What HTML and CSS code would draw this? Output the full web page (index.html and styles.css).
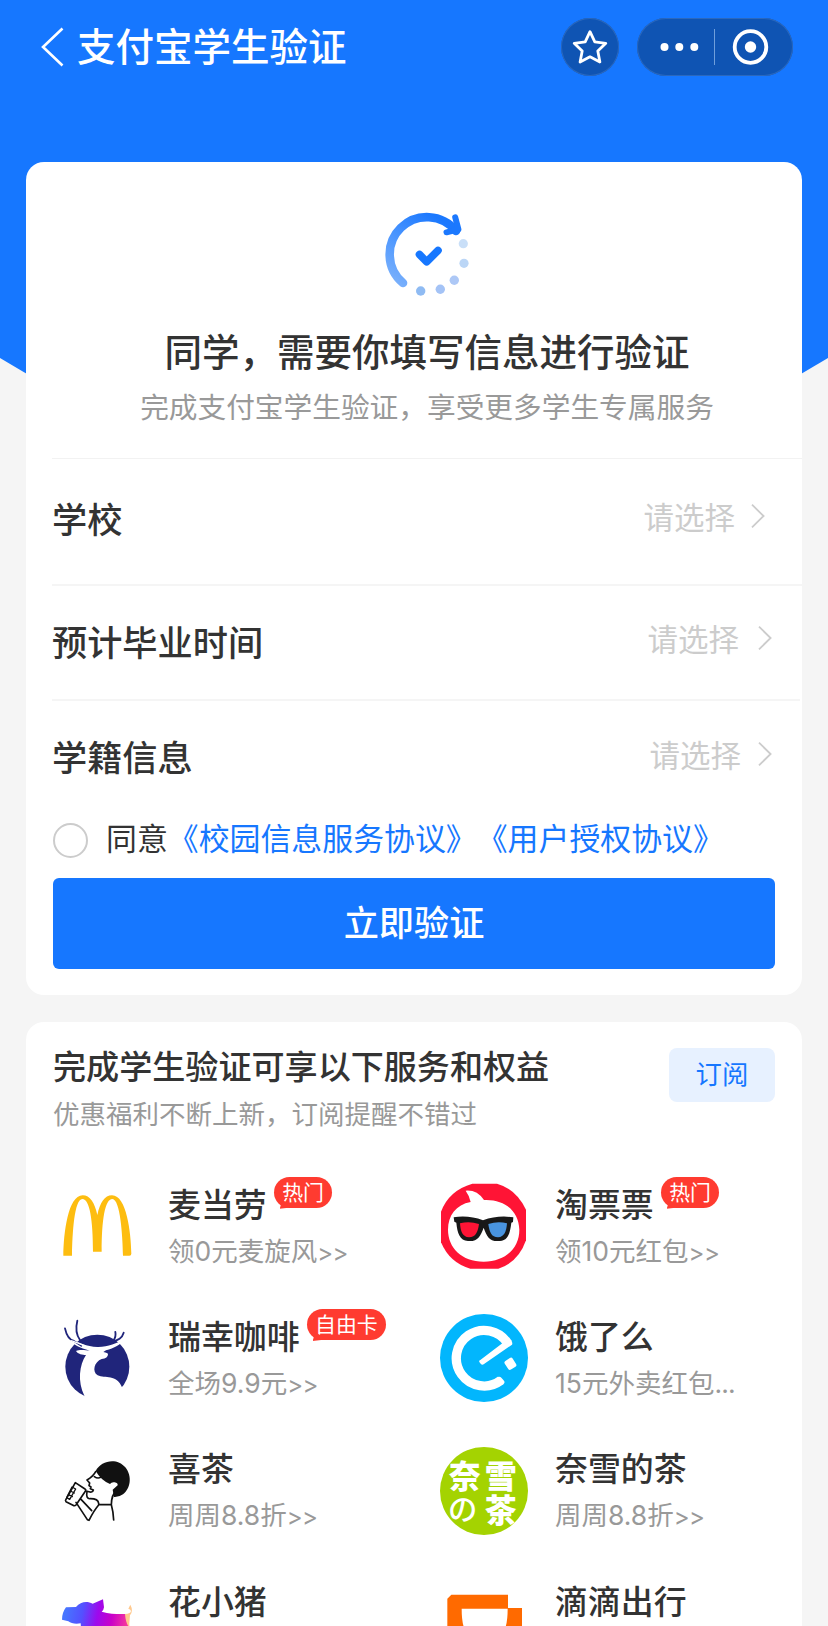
FILE: index.html
```html
<!DOCTYPE html>
<html lang="zh-CN">
<head>
<meta charset="utf-8">
<title>支付宝学生验证</title>
<link rel="stylesheet" href="styles.css">
</head>
<body>
<div class="page">
  <header class="topbar">
    <svg class="back" width="24" height="40" viewBox="0 0 24 40"><path d="M22.500 1.500 3 20l19.500 18.500" fill="none" stroke="#fff" stroke-width="2.600"/></svg>
    <h1 class="topbar-title">支付宝学生验证</h1>
    <div class="round-btn"><svg width="38" height="38" viewBox="0 0 38 38"><path d="M19 3.700 23.800 13.900 34.800 15.300 26.800 23.100 28.900 34 19 28.800 9.100 34 11.200 23.100 3.200 15.300 14.200 13.900Z" fill="none" stroke="#fff" stroke-width="2.800" stroke-linejoin="round"/></svg></div>
    <div class="capsule">
      <svg width="156" height="58" viewBox="0 0 156 58"><g fill="#fff"><circle cx="27.500" cy="29" r="4"/><circle cx="42.300" cy="29" r="4"/><circle cx="57.300" cy="29" r="4"/><circle cx="113.500" cy="29" r="5.700"/></g><path d="M77.500 11v36" stroke="#6f9fdc" stroke-width="1"/><circle cx="113.500" cy="29" r="15.800" fill="none" stroke="#fff" stroke-width="3.800"/></svg>
    </div>
  </header>

  <main class="content">
    <section class="card verify">
      <div class="intro">
        <svg class="intro-icon" width="90" height="90" viewBox="382 208 90 90">
          <defs><linearGradient id="ring" x1="0" y1="1" x2=".7" y2="0"><stop offset="0" stop-color="#7db2fb"/><stop offset=".5" stop-color="#4d97ff"/><stop offset="1" stop-color="#1b78fe"/></linearGradient></defs>
          <path d="M403 283A37.300 37.300 0 1 1 456 231" fill="none" stroke="url(#ring)" stroke-width="8.600" stroke-linecap="round"/>
          <path d="M455.200 217.300 458.400 229.300 446.500 232.300" fill="none" stroke="#1b78fe" stroke-width="6" stroke-linecap="round" stroke-linejoin="round"/>
          <path d="m419.500 254.500 7.200 7.300 11.300-11.300" fill="none" stroke="#1677ff" stroke-width="7.600" stroke-linecap="round" stroke-linejoin="round"/>
          <circle cx="463.300" cy="243.700" r="4.600" fill="#c9dff8"/><circle cx="464" cy="263.300" r="4.600" fill="#bbd6f6"/><circle cx="454.300" cy="280.300" r="4.700" fill="#adc8f6"/><circle cx="440.300" cy="289.300" r="4.700" fill="#a4c3f6"/><circle cx="420.700" cy="291" r="4.700" fill="#8fbbf3"/>
        </svg>
        <h2 class="intro-title">同学，需要你填写信息进行验证</h2>
        <p class="intro-sub">完成支付宝学生验证，享受更多学生专属服务</p>
      </div>
      <div class="row row-school"><span class="label">学校</span><span class="value">请选择</span><svg class="arrow" width="14" height="26" viewBox="0 0 14 26"><path d="M1 1.700 12.600 13 1 24.300" fill="none" stroke="#ccc" stroke-width="1.800"/></svg></div>
      <div class="row row-grad"><span class="label">预计毕业时间</span><span class="value">请选择</span><svg class="arrow" width="14" height="26" viewBox="0 0 14 26"><path d="M1 1.700 12.600 13 1 24.300" fill="none" stroke="#ccc" stroke-width="1.800"/></svg></div>
      <div class="row row-status"><span class="label">学籍信息</span><span class="value">请选择</span><svg class="arrow" width="14" height="26" viewBox="0 0 14 26"><path d="M1 1.700 12.600 13 1 24.300" fill="none" stroke="#ccc" stroke-width="1.800"/></svg></div>
      <div class="agree"><span class="radio"></span><p class="agree-text">同意<a>《校园信息服务协议》</a><a>《用户授权协议》</a></p></div>
      <button class="submit">立即验证</button>
    </section>

    <section class="card benefits">
      <div class="benefits-head">
        <div>
          <h2 class="benefits-title">完成学生验证可享以下服务和权益</h2>
          <p class="benefits-sub">优惠福利不断上新，订阅提醒不错过</p>
        </div>
        <button class="subscribe">订阅</button>
      </div>
      <div class="grid">
        <div class="item">
          <svg class="logo" viewBox="39 37 264 264"><path d="M70 258C71 190 84 77 128 77c22 0 36 22 44 59 8-37 22-59 44-59 44 0 57 113 58 175q0 6-6 6h-19C248 200 241 88 217 88c-22 0-32 62-32 158h-26C159 150 149 88 127 88 103 88 97 190 96 258Z" fill="#fdbd10"/></svg>
          <div class="info"><div class="name">麦当劳<span class="badge">热门</span></div><div class="desc">领0元麦旋风<span class="more">&gt;&gt;</span></div></div>
        </div>
        <div class="item">
          <svg class="logo" viewBox="63 37 264 264"><path d="M160 42h74Q292 58 321 120v92Q298 278 238 297h-84Q92 280 66 218v-92Q90 62 160 42Z" fill="#ff1435"/><path d="M155 97q-4-19-15-34 34-3 55 28c61-3 104 32 106 89 0 54-40 96-107 96-66 0-107-42-107-96 0-43 24-75 68-83Z" fill="#fff"/><path d="M104 143q45-7 88 9 44-16 91-9l-1 14-5 2c-4 32-10 54-34 55-33 3-39-14-49-40-10 26-17 42-47 40-25-2-32-24-35-55l-6-3Z" fill="#181818"/><path d="M123 161q28-8 57 2c-3 23-10 40-30 40-20-1-25-17-27-42Z" fill="#ff1435"/><path d="M208 163q29-10 56-2c-2 25-8 41-27 42-20 0-26-17-29-40Z" fill="#4994df"/></svg>
          <div class="info"><div class="name">淘票票<span class="badge">热门</span></div><div class="desc">领10元红包<span class="more">&gt;&gt;</span></div></div>
        </div>
        <div class="item">
          <svg class="logo" viewBox="9 12 264 264"><circle cx="142" cy="170" r="96" fill="#20257b"/><path d="M103 257C82 215 88 165 108 135 98 135 83 132 78 123 90 117 108 121 119 122 90 114 68 104 58 88 85 96 112 112 145 111 175 110 200 100 226 86 212 104 192 114 168 121L160 126Q174 128 174 133 174 145 155 147C133 155 125 185 143 196 165 206 200 192 216 232L222 270H108Z" fill="#fff"/><path d="M45 55Q52 88 72 93L94 107M82 32C75 60 80 76 90 90M221 68C216 86 203 90 186 96M196 66Q199 80 190 92" fill="none" stroke="#20257b" stroke-width="5.500" stroke-linecap="round"/><path d="M62 92C90 98 110 116 145 119 180 118 205 104 222 86" fill="none" stroke="#fff" stroke-width="4"/></svg>
          <div class="info"><div class="name">瑞幸咖啡<span class="badge">自由卡</span></div><div class="desc">全场9.9元<span class="more">&gt;&gt;</span></div></div>
        </div>
        <div class="item">
          <svg class="logo" viewBox="63 432 264 264"><circle cx="195" cy="564" r="132" fill="#02b6fd"/><path d="M266 520A83.500 83.500 0 1 0 246 631" fill="none" stroke="#fff" stroke-width="28"/><path d="m184 570 66-50 26-10q6 9 3 14l-85 59q-5 3-9-2l-4-5q-2-4 3-6ZM236 622q6-4 11 1l8 9q4 6-2 10l-12 6Z" fill="#fff"/><rect x="260" y="566" width="28" height="31" rx="6" transform="rotate(-33 274 581)" fill="#fff"/></svg>
          <div class="info"><div class="name">饿了么</div><div class="desc">15元外卖红包<span class="dots">...</span></div></div>
        </div>
        <div class="item">
          <svg class="logo" viewBox="39 109 264 264"><path d="M167 181c16-32 64-41 89-11 22 27 15 65-7 81q-12 9-27 8l-4-22 15-13q1-7-9-9-9-2-14 5-27-11-43-39Z" fill="#111"/><g fill="none" stroke="#111" stroke-width="5" stroke-linejoin="round" stroke-linecap="round"><path d="M167 183q-7 14-26 25l8 9-2 8 6 4-2 5 9 4q-2 10-19 4-4 24 10 22c13 0 24 5 25 14v5q-14 16-29 46l-5-2-34-52M121 264l34 36M176 282h38M231 238q-17 14-17 44 6 21 7 46M163 198q10 7 19 2M106 216 135 235Q139 237 136 242L108 283Q104 287 99 284L78 273Q75 270 78 266Z"/><path d="m96 229 11 6-18 31-9-5ZM91 241l12 6M85 252l12 6" stroke-width="4"/></g></svg>
          <div class="info"><div class="name">喜茶</div><div class="desc">周周8.8折<span class="more">&gt;&gt;</span></div></div>
        </div>
        <div class="item">
          <svg class="logo" viewBox="63 109 264 264"><circle cx="195" cy="241" r="132" fill="#a4d301"/><g class="logo-text" fill="#fff"><text x="89" y="231">奈</text><text x="197" y="231">雪</text><text class="kana" x="87" y="329">の</text><text x="197" y="333">茶</text></g></svg>
          <div class="info"><div class="name">奈雪的茶</div><div class="desc">周周8.8折<span class="more">&gt;&gt;</span></div></div>
        </div>
        <div class="item">
          <svg class="logo" viewBox="39 505 264 264"><defs><linearGradient id="pig" gradientUnits="userSpaceOnUse" x1="80" y1="590" x2="275" y2="625"><stop offset="0" stop-color="#4775ff"/><stop offset=".25" stop-color="#5450ff"/><stop offset=".48" stop-color="#9d09ed"/><stop offset=".7" stop-color="#c900c9"/><stop offset="1" stop-color="#ff4693"/></linearGradient></defs><path d="m78 590 30-1c14-17 34-18 50-10l31-13 3 24q-1 9-7 13c31 9 57 7 80 7l5 70H125l-3-42c-17 4-29-1-37-6l-19-5q0-21 12-37Z" fill="url(#pig)"/><path d="M255 610c21-1 22-12 10-16l6-12q10 19-1 32l-3 35q-10-12-12-39Z" fill="#ffc98e"/></svg>
          <div class="info"><div class="name">花小猪</div></div>
        </div>
        <div class="item">
          <svg class="logo" viewBox="63 505 264 264"><path d="M97 552h170v40h42v56q0 70-70 70h-84q-70 0-70-70v-84Z" fill="#ff6a00"/><path d="M128 594h138q0 34-6 54 0 30-30 30h-66q-30 0-30-30-6-20-6-54Z" fill="#fff"/></svg>
          <div class="info"><div class="name">滴滴出行</div></div>
        </div>
      </div>
    </section>
  </main>
</div>
</body>
</html>
```
FILE: styles.css
```css
* { box-sizing: border-box; margin: 0; padding: 0; }
body {
  background: #f5f5f5;
  color: #333;
  font-family: "Noto Sans CJK SC", sans-serif;
  text-spacing-trim: space-all;
}
h1, h2 { font-weight: 500; }
button { border: 0; font-family: inherit; }
svg { display: block; flex: none; }

.page {
  height: 1626px;
  overflow: hidden;
  background: #f5f5f5;
  position: relative;
}
.page::before {
  content: "";
  position: absolute;
  inset: 0 0 auto;
  height: 480px;
  background: #1677ff;
  clip-path: polygon(0 0, 100% 0, 100% 358px, 90% 407px, 10% 407px, 0 358px);
}
.topbar, .content { position: relative; }
.topbar {
  height: 94px;
  padding: 0 35px 0 40px;
  display: flex;
  align-items: center;
  color: #fff;
}
.topbar-title {
  margin-left: 13px;
  font-size: 38.500px;
  line-height: 54px;
  padding-bottom: 7px;
  flex: 1;
}
.round-btn, .capsule {
  height: 58px;
  border-radius: 29px;
  background: #0f54b3;
  box-shadow: inset 0 0 0 1px #2b68bd;
}
.round-btn {
  width: 58px;
  display: flex;
  align-items: center;
  justify-content: center;
  margin-right: 18px;
}
.capsule { width: 156px; }

.content { padding: 68px 26px 0; }
.card { background: #fff; border-radius: 18px; }
.verify { height: 833px; padding-left: 26px; }
.intro {
  height: 297px;
  padding-top: 46px;
  border-bottom: 1px solid #f2f2f2;
  text-align: center;
}
.intro-icon { margin: 0 auto; }
.intro-title { font-size: 37.500px; line-height: 54px; margin-top: 25px; white-space: nowrap; }
.intro-sub { font-size: 28.700px; line-height: 40px; margin-top: 9px; color: #999; white-space: nowrap; }

.row { display: flex; align-items: center; }
.row-school { height: 127px; border-bottom: 2px solid #f5f5f5; padding: 0 37px 5px 0; }
.row-grad { height: 115px; border-bottom: 2px solid #f5f5f5; margin-right: 2px; padding: 0 28px 2px 0; }
.row-status { height: 112px; padding: 0 30px 0 0; }
.label { flex: 1; font-size: 35.200px; line-height: 50px; font-weight: 500; padding-bottom: 2px; }
.value { font-size: 30.500px; line-height: 44px; color: #ccc; padding-bottom: 7px; margin-right: 16px; }
.row-grad .value { margin-right: 19px; }
.row-status .value { margin-right: 17px; }
.arrow { margin-bottom: 7px; }

.agree { display: flex; align-items: center; height: 54px; }
.radio { width: 35px; height: 35px; border: 2px solid #ccc; border-radius: 50%; margin: 1px 18px 0 1px; }
.agree-text { font-size: 30.900px; line-height: 44px; padding-bottom: 6px; white-space: nowrap; }
.agree-text a { color: #1677ff; }
.submit {
  display: block;
  width: 722px;
  height: 91px;
  margin: 11px 0 0 1px;
  border-radius: 6px;
  background: #1677ff;
  color: #fff;
  font-size: 35.200px;
  font-weight: 500;
  padding-bottom: 7px;
}

.benefits { margin-top: 27px; padding: 20px 27px 0; height: 700px; }
.benefits-head { display: flex; justify-content: space-between; }
.benefits-title { font-size: 33.100px; line-height: 46px; white-space: nowrap; }
.benefits-sub { font-size: 26.500px; line-height: 38px; color: #999; margin-top: 6px; }
.subscribe {
  width: 106px;
  height: 54px;
  margin-top: 6px;
  border-radius: 8px;
  background: #e7f1ff;
  color: #1677ff;
  font-size: 26.400px;
  padding-bottom: 5px;
}
.grid {
  display: grid;
  grid-template-columns: 387px 1fr;
  grid-auto-rows: 132.300px;
  margin-top: 28px;
}
.item { display: flex; align-items: center; white-space: nowrap; }
.logo { width: 88px; height: 88px; }
.logo-text { font: 900 96px "Noto Sans CJK JP", serif; }
.kana { font-size: 88px; font-weight: 500; }
.info { margin-left: 27px; height: 93px; }
.name { display: flex; font-size: 32.900px; line-height: 46px; font-weight: 500; }
.desc { font: 400 26.500px/38px Inter, "Noto Sans CJK SC", sans-serif; color: #999; margin-top: 6px; }
.more { font-size: 24px; letter-spacing: -0.500px; }
.dots { letter-spacing: -0.800px; }
.badge {
  position: relative;
  height: 31px;
  margin: -3px 0 0 7px;
  padding: 0 8.500px;
  border-radius: 16px;
  background: #ff3b30;
  color: #fff;
  font-size: 20.900px;
  line-height: 28px;
  font-weight: 400;
}
.badge::after {
  content: "";
  position: absolute;
  left: 6px;
  bottom: -1px;
  width: 13px;
  height: 9px;
  background: #ff3b30;
  clip-path: polygon(0 100%, 3px 0, 100% 85%);
}
```
